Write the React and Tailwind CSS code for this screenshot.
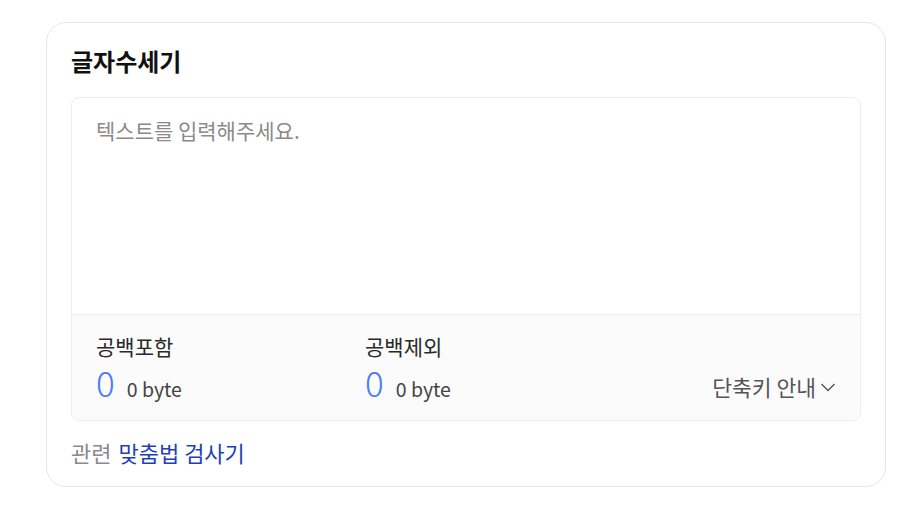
import { useState } from "react";

const font = {
  fontFamily: '"Noto Sans CJK KR", "Noto Sans", sans-serif',
};

function Stat({ label, count, bytes }) {
  return (
    <div className="w-[269px] shrink-0">
      <p className="text-[21px] leading-[27px] text-[#2a2a2a]">{label}</p>
      <div className="flex items-baseline mt-[2px]">
        <span className="text-[35px] leading-[40px] text-[#4b7cf3] font-light">
          {count}
        </span>
        <span className="ml-[12px] text-[19.5px] text-[#444]">{bytes} byte</span>
      </div>
    </div>
  );
}

export default function App() {
  const [text, setText] = useState("");
  const withSpace = text.length;
  const noSpace = text.replace(/\s/g, "").length;
  const bytes = new Blob([text]).size;
  const bytesNoSpace = new Blob([text.replace(/\s/g, "")]).size;

  return (
    <div className="min-h-screen bg-white pt-[22px] pl-[46px]" style={font}>
      <div className="w-[840px] h-[465px] border border-[#e6e6e6] rounded-[20px] px-[24px] pt-[22px]">
        <h1 className="text-[24px] leading-[32px] font-bold text-[#111]">
          글자수세기
        </h1>

        <div className="mt-[20px] border border-[#ececec] rounded-[8px] overflow-hidden">
          <textarea
            value={text}
            onChange={(e) => setText(e.target.value)}
            placeholder="텍스트를 입력해주세요."
            className="block w-full h-[216px] resize-none px-[24px] pt-[19px] text-[21px] leading-[27px] text-[#222] placeholder:text-[#8a8a8a] outline-none"
          />
          <div className="flex items-end border-t border-[#ececec] bg-[#fbfbfb] h-[106px] px-[24px] pt-[19px] pb-[17px]">
            <Stat label="공백포함" count={withSpace} bytes={bytes} />
            <Stat label="공백제외" count={noSpace} bytes={bytesNoSpace} />
            <button className="ml-auto flex items-center gap-[4px] text-[21.5px] leading-[28px] text-[#555] mb-[2px]">
              단축키 안내
              <svg
                width="16"
                height="16"
                viewBox="0 0 16 16"
                fill="none"
                stroke="#555"
                strokeWidth="1.4"
              >
                <path d="M1.5 5l6.5 6.5 6.5-6.5" />
              </svg>
            </button>
          </div>
        </div>

        <p className="mt-[17px] text-[22px] leading-[28px]">
          <span className="text-[#8a8a8a]">관련</span>
          <a href="#" className="ml-[7px] text-[#1f3fb8]">
            맞춤법 검사기
          </a>
        </p>
      </div>
    </div>
  );
}
